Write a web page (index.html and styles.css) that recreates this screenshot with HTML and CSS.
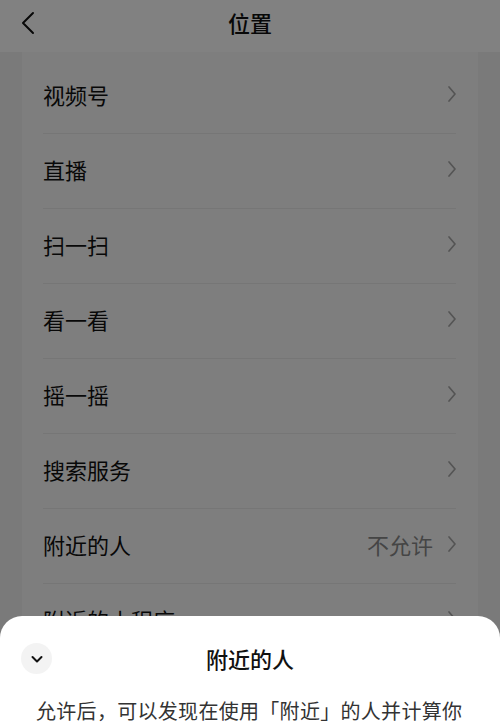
FILE: index.html
```html
<!DOCTYPE html>
<html lang="zh-CN">
<head>
<meta charset="utf-8">
<title>位置</title>
<link rel="stylesheet" href="styles.css">
</head>
<body>
<div class="screen">
  <header class="nav">
    <svg class="nav-back" width="16" height="24" viewBox="0 0 16 24"><path d="M13 2 L3 12 L13 22" fill="none" stroke="#111" stroke-width="2" stroke-linecap="round" stroke-linejoin="round"/></svg>
    <h1 class="nav-title">位置</h1>
  </header>
  <main class="page">
    <ul class="card">
      <li class="row"><span class="row-label">视频号</span><span class="row-end"><svg class="chev" width="10" height="18" viewBox="0 0 10 18"><path d="M2 2 L8 9 L2 16" fill="none" stroke-width="1.7" stroke-linecap="round" stroke-linejoin="round"/></svg></span></li>
      <li class="row"><span class="row-label">直播</span><span class="row-end"><svg class="chev" width="10" height="18" viewBox="0 0 10 18"><path d="M2 2 L8 9 L2 16" fill="none" stroke-width="1.7" stroke-linecap="round" stroke-linejoin="round"/></svg></span></li>
      <li class="row"><span class="row-label">扫一扫</span><span class="row-end"><svg class="chev" width="10" height="18" viewBox="0 0 10 18"><path d="M2 2 L8 9 L2 16" fill="none" stroke-width="1.7" stroke-linecap="round" stroke-linejoin="round"/></svg></span></li>
      <li class="row"><span class="row-label">看一看</span><span class="row-end"><svg class="chev" width="10" height="18" viewBox="0 0 10 18"><path d="M2 2 L8 9 L2 16" fill="none" stroke-width="1.7" stroke-linecap="round" stroke-linejoin="round"/></svg></span></li>
      <li class="row"><span class="row-label">摇一摇</span><span class="row-end"><svg class="chev" width="10" height="18" viewBox="0 0 10 18"><path d="M2 2 L8 9 L2 16" fill="none" stroke-width="1.7" stroke-linecap="round" stroke-linejoin="round"/></svg></span></li>
      <li class="row"><span class="row-label">搜索服务</span><span class="row-end"><svg class="chev" width="10" height="18" viewBox="0 0 10 18"><path d="M2 2 L8 9 L2 16" fill="none" stroke-width="1.7" stroke-linecap="round" stroke-linejoin="round"/></svg></span></li>
      <li class="row"><span class="row-label">附近的人</span><span class="row-end"><span class="row-value">不允许</span><svg class="chev" width="10" height="18" viewBox="0 0 10 18"><path d="M2 2 L8 9 L2 16" fill="none" stroke-width="1.7" stroke-linecap="round" stroke-linejoin="round"/></svg></span></li>
      <li class="row"><span class="row-label">附近的小程序</span><span class="row-end"><svg class="chev" width="10" height="18" viewBox="0 0 10 18"><path d="M2 2 L8 9 L2 16" fill="none" stroke-width="1.7" stroke-linecap="round" stroke-linejoin="round"/></svg></span></li>
    </ul>
  </main>
  <div class="mask"></div>
  <section class="sheet">
    <div class="sheet-head">
      <span class="sheet-close"><svg width="14" height="10" viewBox="0 0 14 10"><path d="M2.5 3 L7 7.5 L11.5 3" fill="none" stroke="#111" stroke-width="2" stroke-linecap="round" stroke-linejoin="round"/></svg></span>
      <h2 class="sheet-title">附近的人</h2>
    </div>
    <p class="sheet-text">允许后，可以发现在使用「附近」的人并计算你与他们的距离，同时你也会被他们发现。</p>
  </section>
</div>
</body>
</html>
```
FILE: styles.css
```css
* { box-sizing: border-box; }

html, body {
  margin: 0;
  padding: 0;
}

body {
  font-family: "Noto Sans CJK SC", "Noto Sans", sans-serif;
  background: #f0f0f0;
  color: #111;
}

.screen {
  position: relative;
  width: 500px;
  height: 724px;
  overflow: hidden;
  background: #f0f0f0;
}

.nav {
  position: relative;
  height: 52px;
  padding-bottom: 9px;
  background: #fefefe;
  display: flex;
  align-items: center;
  justify-content: center;
}

.nav-back {
  position: absolute;
  left: 20px;
  top: 11px;
}

.nav-title {
  margin: 0;
  font-size: 22px;
  font-weight: 500;
  line-height: 1;
  color: #111;
}

.page {
  padding: 0 22px;
}

.card {
  list-style: none;
  margin: 0;
  padding: 7px 22px 0 21px;
  background: #f8f8f8;
}

.row {
  height: 75px;
  padding-bottom: 4px;
  display: flex;
  align-items: center;
  justify-content: space-between;
  border-bottom: 1px solid #e8e8e8;
}

.row-label {
  font-size: 22px;
  color: #111;
}

.row-end {
  display: flex;
  align-items: center;
  gap: 14px;
}

.row-value {
  font-size: 22px;
  color: #888;
}

.chev {
  display: block;
  margin-right: -1px;
  stroke: #a6a6a6;
}

.mask {
  position: absolute;
  inset: 0;
  background: rgba(0, 0, 0, 0.49);
}

.sheet {
  position: absolute;
  left: 0;
  right: 0;
  top: 616px;
  height: 300px;
  background: #fff;
  border-radius: 22px 22px 0 0;
  padding: 26px 36px 0;
}

.sheet-head {
  position: relative;
  height: 32px;
  display: flex;
  align-items: center;
  justify-content: center;
}

.sheet-close {
  position: absolute;
  left: -15px;
  top: 1px;
  width: 31px;
  height: 31px;
  border-radius: 50%;
  background: #f3f3f3;
  display: flex;
  align-items: center;
  justify-content: center;
}

.sheet-title {
  margin: 0;
  font-size: 22px;
  font-weight: 500;
  line-height: 1;
  color: #111;
}

.sheet-text {
  margin: 21px 0 0;
  font-size: 20px;
  line-height: 32px;
  letter-spacing: 0.3px;
  color: #333;
}
```
